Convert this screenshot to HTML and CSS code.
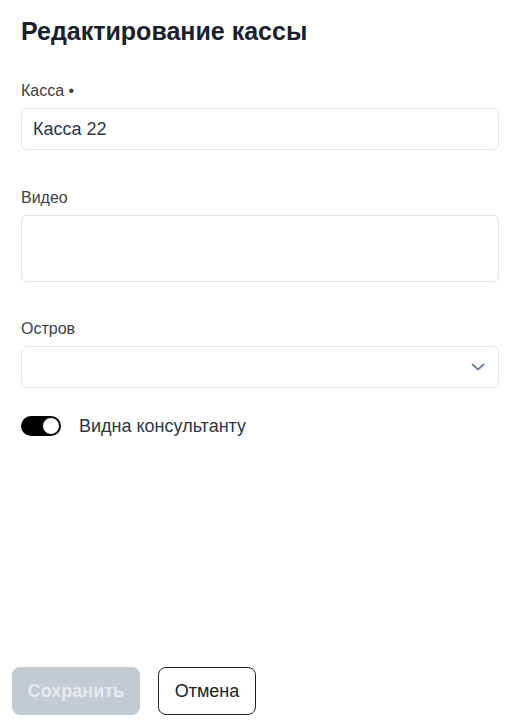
FILE: index.html
```html
<!DOCTYPE html>
<html lang="ru">
<head>
<meta charset="utf-8">
<link rel="stylesheet" href="styles.css">
</head>
<body>
<div class="page">
  <form class="form">
    <h1 class="title">Редактирование кассы</h1>
    <div class="field">
      <label class="label">Касса •</label>
      <div class="input">Касса 22</div>
    </div>
    <div class="field field-video">
      <label class="label">Видео</label>
      <div class="input textarea"></div>
    </div>
    <div class="field field-last">
      <label class="label">Остров</label>
      <div class="input select">
        <svg class="chev" width="16" height="10" viewBox="0 0 16 10"><path d="M2.5 2.5 L8 7.5 L13.5 2.5" fill="none" stroke="#718096" stroke-width="1.8" stroke-linecap="round" stroke-linejoin="round"/></svg>
      </div>
    </div>
    <div class="toggle-row">
      <span class="toggle"><span class="knob"></span></span>
      <span class="toggle-text">Видна консультанту</span>
    </div>
  </form>
  <div class="footer">
    <button class="btn btn-save" type="button">Сохранить</button>
    <button class="btn btn-cancel" type="button">Отмена</button>
  </div>
</div>
</body>
</html>
```
FILE: styles.css
```css
* { box-sizing: border-box; }
html, body { margin: 0; padding: 0; background: #fff; }
body { font-family: "Liberation Sans", Arial, sans-serif; color: #2d3748; }
.page { min-height: 724px; display: flex; flex-direction: column; }
.form { padding: 14px 23px 0 21px; display: flex; flex-direction: column; }
.title { margin: 0 0 33px; font-size: 25px; line-height: 34px; font-weight: 700; color: #1a202c; }
.field { display: flex; flex-direction: column; margin-bottom: 38px; }
.field-video { margin-bottom: 37px; }
.field-last { margin-bottom: 26px; }
.label { font-size: 16px; line-height: 20px; color: #3f3f3f; margin-bottom: 7px; }
.input { height: 42px; border: 1px solid #e2e8f0; border-radius: 5px; font-size: 18px; line-height: 40px; padding: 0 11px; color: #2d3748; }
.textarea { height: 67px; }
.select { display: flex; align-items: center; justify-content: flex-end; padding-right: 12px; }
.chev { display: block; }
.toggle-row { display: flex; align-items: center; gap: 18px; }
.toggle { width: 40px; height: 20px; border-radius: 10px; background: #000; display: flex; align-items: center; justify-content: flex-end; padding: 1px; }
.knob { width: 18px; height: 18px; border-radius: 50%; background: #fff; border: 1px solid #000; }
.toggle-text { font-size: 18px; line-height: 24px; color: #2d3748; }
.footer { margin-top: auto; padding: 0 0 9px 12px; display: flex; gap: 18px; }
.btn { height: 48px; border-radius: 8px; font-family: inherit; font-size: 18px; padding: 0; }
.btn-save { width: 128px; background: #c4cad2; border: none; color: #e6eaee; font-weight: 700; }
.btn-cancel { width: 98px; background: #fff; border: 1px solid #222; color: #222; }
```
